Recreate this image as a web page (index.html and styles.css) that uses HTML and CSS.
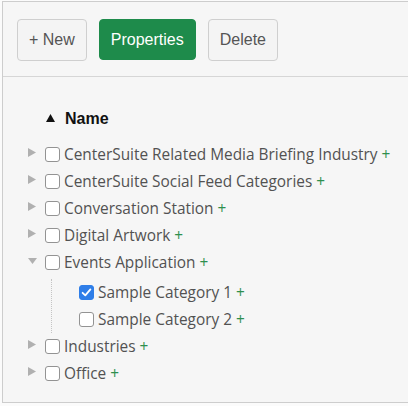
FILE: index.html
```html
<!DOCTYPE html>
<html>
<head>
<meta charset="utf-8">
<link rel="stylesheet" href="styles.css">
</head>
<body>
<div class="panel">
  <div class="toolbar">
    <button class="btn">+ New</button>
    <button class="btn btn-primary">Properties</button>
    <button class="btn">Delete</button>
  </div>
  <div class="tree">
    <div class="header">
      <svg class="sort" width="9" height="8" viewBox="0 0 9 8"><polygon points="4.5,0 9,8 0,8" fill="#111"/></svg>
      <span class="header-label">Name</span>
    </div>
    <ul class="nodes">
      <li class="row"><span class="exp"><svg width="8" height="9" viewBox="0 0 8 9"><polygon points="0,0 8,4.5 0,9" fill="#b0b0b0"/></svg></span><span class="cb"></span><span class="label">CenterSuite Related Media Briefing Industry <span class="add">+</span></span></li>
      <li class="row"><span class="exp"><svg width="8" height="9" viewBox="0 0 8 9"><polygon points="0,0 8,4.5 0,9" fill="#b0b0b0"/></svg></span><span class="cb"></span><span class="label">CenterSuite Social Feed Categories <span class="add">+</span></span></li>
      <li class="row"><span class="exp"><svg width="8" height="9" viewBox="0 0 8 9"><polygon points="0,0 8,4.5 0,9" fill="#b0b0b0"/></svg></span><span class="cb"></span><span class="label">Conversation Station <span class="add">+</span></span></li>
      <li class="row"><span class="exp"><svg width="8" height="9" viewBox="0 0 8 9"><polygon points="0,0 8,4.5 0,9" fill="#b0b0b0"/></svg></span><span class="cb"></span><span class="label">Digital Artwork <span class="add">+</span></span></li>
      <li>
        <div class="row"><span class="exp"><svg width="9" height="6" viewBox="0 0 9 6"><polygon points="0,0 9,0 4.5,6" fill="#b0b0b0"/></svg></span><span class="cb"></span><span class="label">Events Application <span class="add">+</span></span></div>
        <ul class="children">
          <li class="row"><span class="cb checked"><svg width="15" height="15" viewBox="0 0 15 15"><polyline points="3.6,7.8 6.3,10.4 11.4,4.4" fill="none" stroke="#fff" stroke-width="1.8" stroke-linecap="round" stroke-linejoin="round"/></svg></span><span class="label">Sample Category 1 <span class="add">+</span></span></li>
          <li class="row"><span class="cb"></span><span class="label">Sample Category 2 <span class="add">+</span></span></li>
        </ul>
      </li>
      <li class="row"><span class="exp"><svg width="8" height="9" viewBox="0 0 8 9"><polygon points="0,0 8,4.5 0,9" fill="#b0b0b0"/></svg></span><span class="cb"></span><span class="label">Industries <span class="add">+</span></span></li>
      <li class="row"><span class="exp"><svg width="8" height="9" viewBox="0 0 8 9"><polygon points="0,0 8,4.5 0,9" fill="#b0b0b0"/></svg></span><span class="cb"></span><span class="label">Office <span class="add">+</span></span></li>
    </ul>
  </div>
</div>
</body>
</html>
```

FILE: styles.css
```css
html, body {
  margin: 0;
  padding: 0;
  background: #fbfbfb;
}
body {
  padding-top: 1px;
  padding-left: 2px;
}
.panel {
  height: 400px;
  background: #f6f6f6;
  border: 1px solid #cdcdcd;
  border-right: none;
  overflow: hidden;
}
.toolbar {
  height: 75px;
  box-sizing: border-box;
  padding: 17px 0 0 14px;
  border-bottom: 1px solid #d6d6d6;
  display: flex;
  gap: 12px;
  align-items: flex-start;
}
.btn {
  height: 42px;
  box-sizing: border-box;
  padding: 0 11px;
  border: 1px solid #cfcfcf;
  border-radius: 4px;
  background: #f4f4f4;
  color: #555;
  font-family: "Liberation Sans", Arial, sans-serif;
  font-size: 16px;
  line-height: 40px;
  margin: 0;
}
.btn-primary {
  background: #1e8b4b;
  border-color: #1e8b4b;
  color: #fff;
  height: 41px;
  line-height: 39px;
}
.tree {
  padding: 28px 0 0 25px;
}
.header {
  height: 27px;
  display: flex;
  align-items: center;
  margin-bottom: 9px;
  padding-left: 18px;
}
.sort {
  display: block;
  margin-right: 10px;
  position: relative;
  top: -1px;
}
.header-label {
  font-family: "Liberation Sans", Arial, sans-serif;
  font-weight: bold;
  font-size: 16px;
  color: #111;
}
ul {
  list-style: none;
  margin: 0;
  padding: 0;
}
.row {
  height: 27px;
  display: flex;
  align-items: center;
  font-family: "Open Sans", sans-serif;
  font-size: 15.4px;
  color: #525252;
  white-space: nowrap;
}
.exp {
  width: 17px;
  height: 27px;
  display: flex;
  align-items: center;
  padding-bottom: 4px;
  box-sizing: border-box;
}
.exp svg {
  display: block;
}
.cb {
  width: 15px;
  height: 15px;
  box-sizing: border-box;
  border: 1px solid #939393;
  border-radius: 3px;
  background: #fff;
  margin-right: 4px;
  flex: none;
}
.cb.checked {
  background: #2f7ee8;
  border-color: #2f7ee8;
}
.cb.checked svg {
  display: block;
  margin: -1px;
}
.label {
  display: block;
}
.add {
  color: #2e8f4e;
}
.children {
  margin: 3px 0 0 23px;
  padding-left: 27px;
  border-left: 1px dotted #c4c4c4;
}
```
